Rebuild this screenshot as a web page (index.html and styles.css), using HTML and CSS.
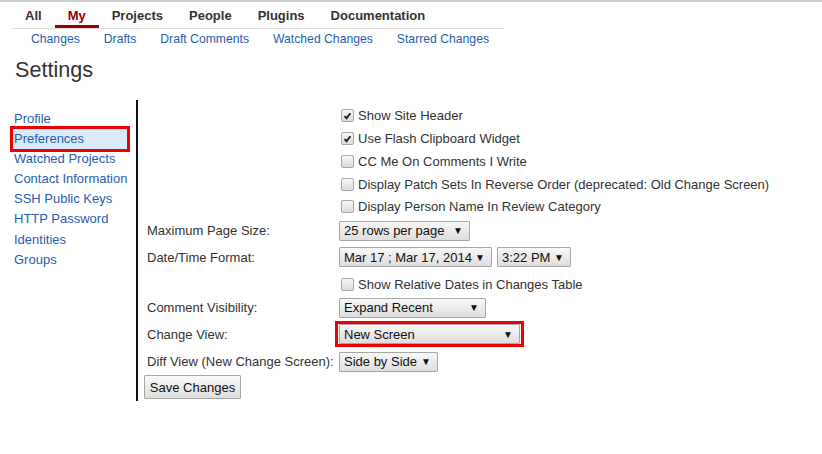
FILE: index.html
```html
<!DOCTYPE html>
<html>
<head>
<meta charset="utf-8">
<link rel="stylesheet" href="styles.css">
</head>
<body>
<div class="topline"></div>
<nav class="nav">
  <ul class="menu">
    <li class="menu-item">All</li>
    <li class="menu-item active">My</li>
    <li class="menu-item">Projects</li>
    <li class="menu-item">People</li>
    <li class="menu-item">Plugins</li>
    <li class="menu-item">Documentation</li>
  </ul>
  <ul class="submenu">
    <li class="sub-item">Changes</li>
    <li class="sub-item">Drafts</li>
    <li class="sub-item">Draft Comments</li>
    <li class="sub-item">Watched Changes</li>
    <li class="sub-item">Starred Changes</li>
  </ul>
</nav>
<h1 class="title">Settings</h1>
<div class="settings">
  <ul class="sidebar">
    <li class="side-item">Profile</li>
    <li class="side-item selected">Preferences</li>
    <li class="side-item">Watched Projects</li>
    <li class="side-item">Contact Information</li>
    <li class="side-item">SSH Public Keys</li>
    <li class="side-item">HTTP Password</li>
    <li class="side-item gap">Identities</li>
    <li class="side-item">Groups</li>
  </ul>
  <div class="panel">
    <div class="row row-check"><span class="label"></span><span class="check-wrap"><span class="cb checked"><svg viewBox="0 0 12 12" width="12" height="12"><path d="M2.8 6.2 L4.9 8.4 L9.2 3" fill="none" stroke="#222" stroke-width="2.1"/></svg></span>Show Site Header</span></div>
    <div class="row row-check"><span class="label"></span><span class="check-wrap"><span class="cb checked"><svg viewBox="0 0 12 12" width="12" height="12"><path d="M2.8 6.2 L4.9 8.4 L9.2 3" fill="none" stroke="#222" stroke-width="2.1"/></svg></span>Use Flash Clipboard Widget</span></div>
    <div class="row row-check"><span class="label"></span><span class="check-wrap"><span class="cb"></span>CC Me On Comments I Write</span></div>
    <div class="row row-check"><span class="label"></span><span class="check-wrap"><span class="cb"></span>Display Patch Sets In Reverse Order (deprecated: Old Change Screen)</span></div>
    <div class="row row-check last"><span class="label"></span><span class="check-wrap"><span class="cb"></span>Display Person Name In Review Category</span></div>
    <div class="row row-pagesize"><span class="label">Maximum Page Size:</span><span class="controls"><span class="select w-pagesize"><span>25 rows per page</span><span class="arrow">▼</span></span></span></div>
    <div class="row row-date"><span class="label">Date/Time Format:</span><span class="controls"><span class="select w-date"><span>Mar 17 ; Mar 17, 2014</span><span class="arrow">▼</span></span><span class="select w-time"><span>3:22 PM</span><span class="arrow">▼</span></span></span></div>
    <div class="row row-rel"><span class="label"></span><span class="check-wrap"><span class="cb"></span>Show Relative Dates in Changes Table</span></div>
    <div class="row row-comment"><span class="label">Comment Visibility:</span><span class="controls"><span class="select w-comment"><span>Expand Recent</span><span class="arrow">▼</span></span></span></div>
    <div class="row row-view"><span class="label">Change View:</span><span class="controls"><span class="highlight"><span class="select w-view"><span>New Screen</span><span class="arrow">▼</span></span></span></span></div>
    <div class="row row-diff"><span class="label">Diff View (New Change Screen):</span><span class="controls"><span class="select w-diff"><span>Side by Side</span><span class="arrow">▼</span></span></span></div>
    <div class="row row-save"><button class="btn">Save Changes</button></div>
  </div>
</div>
</body>
</html>
```
FILE: styles.css
```css
* { box-sizing: border-box; }
html, body { margin: 0; padding: 0; background: #fff; }
body {
  font-family: "Liberation Sans", Arial, sans-serif;
  font-size: 13px;
  color: #333;
}
ul { list-style: none; margin: 0; padding: 0; }

.topline { height: 2px; background: #cfcfcf; }

.nav { padding-left: 12px; }
.menu {
  display: flex;
  height: 26px;
  align-items: flex-end;
}
.menu-item {
  font-weight: bold;
  padding: 2px 13px 0;
  height: 24px;
  line-height: 20px;
  border-bottom: 3px solid transparent;
  color: #333;
  white-space: nowrap;
}
.menu-item.active {
  color: #990000;
  border-bottom-color: #990000;
}
.submenu {
  display: flex;
  width: 492px;
  border-top: 1px solid #ddd;
  padding-left: 7px;
  height: 20px;
  align-items: center;
  white-space: nowrap;
}
.sub-item {
  padding: 0 12px;
  color: #2a5db0;
  font-size: 12.2px;
  line-height: 18px;
  flex: none;
}

.title {
  margin: 0;
  padding: 9px 0 0 15px;
  font-size: 21.6px;
  font-weight: normal;
  line-height: 25px;
  color: #333;
}

.settings {
  display: flex;
  margin-top: 18px;
}
.sidebar {
  width: 138px;
  padding: 9px 0 0 10px;
  border-right: 2px solid #111;
  align-self: stretch;
}
.side-item {
  height: 20px;
  line-height: 20px;
  padding-left: 4px;
  color: #2a5db0;
  width: 120px;
  white-space: nowrap;
}
.side-item.gap { margin-top: 1px; }
.side-item.selected {
  border: 3px solid #ee0000;
  background: #d9eaf8;
  height: 26px;
  line-height: 20px;
  padding-left: 1px;
  margin: -3px 0;
}

.panel {
  padding: 4px 0 0 8px;
}
.row {
  display: flex;
  align-items: center;
  height: 23px;
  white-space: nowrap;
}
.label {
  width: 193px;
  flex: none;
  padding-left: 1px;
}
.check-wrap {
  display: flex;
  align-items: center;
  padding-left: 2px;
}
.cb {
  width: 13px;
  height: 13px;
  border: 1px solid #a8a8a8;
  border-radius: 2px;
  background: linear-gradient(#f6f6f6, #dcdcdc);
  margin-right: 4px;
  display: flex;
  align-items: center;
  justify-content: center;
}
.cb svg { display: block; }

.controls { display: flex; gap: 5px; }
.select {
  height: 20px;
  border: 1px solid #a6a6a6;
  border-radius: 1px;
  background: linear-gradient(#f8f8f8, #dedede);
  display: flex;
  align-items: center;
  justify-content: space-between;
  padding: 0 6px 0 4px;
  color: #111;
}
.arrow { font-size: 10px; color: #111; }
.w-pagesize { width: 131px; }
.w-date { width: 153px; }
.w-time { width: 74px; }
.w-comment { width: 147px; }
.w-view { width: 181px; }
.w-diff { width: 99px; }

.highlight {
  display: block;
  border: 3px solid #ee0000;
  margin-left: -4px;
  padding: 0 1px;
}

.row-check { height: 23px; }
.row-check.last { height: 21px; }
.row-pagesize { height: 27px; }
.row-date { height: 29px; padding-bottom: 3px; }
.row-rel { height: 22px; }
.row-comment { height: 25px; }
.row-view { height: 28px; }
.row-diff { height: 27px; }
.row-save { height: 26px; align-items: flex-start; }

.btn {
  font-family: "Liberation Sans", Arial, sans-serif;
  font-size: 13px;
  color: #111;
  height: 24px;
  width: 97px;
  border: 1px solid #a6a6a6;
  border-radius: 1px;
  background: linear-gradient(#fafafa, #dedede);
  padding: 0;
  margin-left: -2px;
}
```
